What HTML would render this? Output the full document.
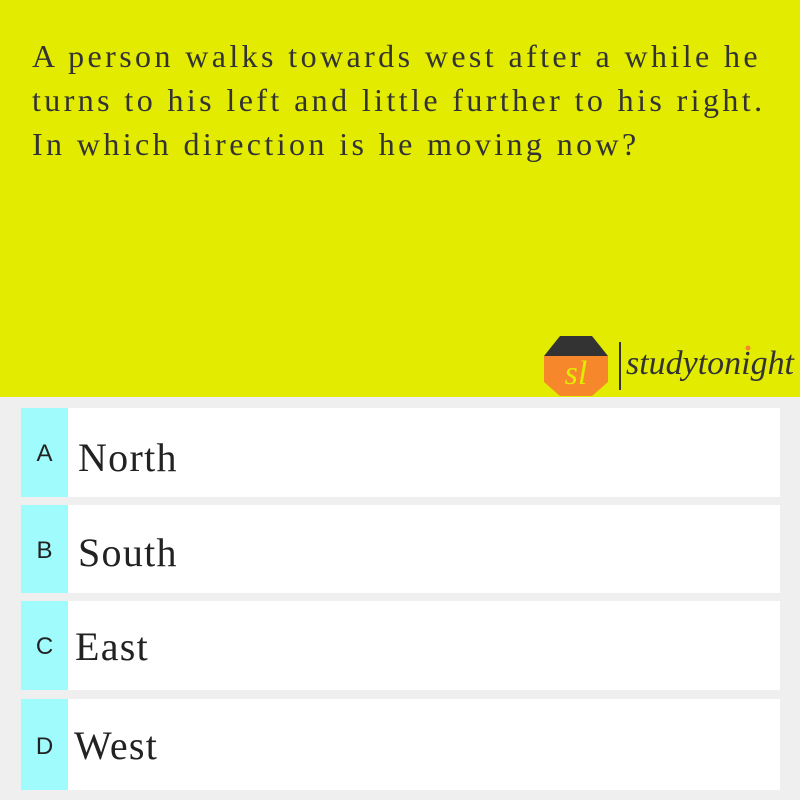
<!DOCTYPE html>
<html><head><style>
body{margin:0;width:800px;height:800px;background:#efefef;position:relative;overflow:hidden;font-family:"Liberation Serif",serif}
.top{position:absolute;left:0;top:0;width:800px;height:397px;background:#e3ec00}
.q{position:absolute;left:32px;top:34px;width:790px;font-size:32px;line-height:44px;color:#333;letter-spacing:3.4px;white-space:nowrap}
.opt{position:absolute;left:21px;width:759px;background:#fff}
.opt .l{position:absolute;left:0;top:0;bottom:0;width:47px;background:#a0fbfc;font-family:"Liberation Sans",sans-serif;font-size:24px;color:#222;text-align:center}
.opt .t{position:absolute;left:57px;font-size:40px;color:#222;letter-spacing:1.3px}
</style></head><body>
<div class="top"></div>
<div class="q">A person walks towards west after a while he<br>turns to his left and little further to his right.<br>In which direction is he moving now?</div>
<svg style="position:absolute;left:540px;top:330px" width="260" height="72" viewBox="0 0 260 72">
<path d="M4 26 L20 6 L52 6 L68 26 Z" fill="#333"/>
<path d="M4 26 H68 V52 L52 66 H20 L4 52 Z" fill="#f7872b"/>
<text x="36" y="54" font-family="Liberation Serif" font-style="italic" font-size="34" fill="#e3ec00" text-anchor="middle">sl</text>
<rect x="79" y="12" width="2" height="48" fill="#333"/>
<text x="86" y="44" font-family="Liberation Serif" font-style="italic" font-size="34" fill="#333" textLength="168" lengthAdjust="spacingAndGlyphs">studytonight</text>
<circle cx="208" cy="18" r="2.5" fill="#f7872b"/>
</svg>
<div class="opt" style="top:408px;height:89px"><div class="l" style="line-height:92px">A</div><div class="t" style="top:26px">North</div></div>
<div class="opt" style="top:505px;height:88px"><div class="l" style="line-height:92px">B</div><div class="t" style="top:24px">South</div></div>
<div class="opt" style="top:601px;height:89px"><div class="l" style="line-height:92px">C</div><div class="t" style="top:22px;left:54px">East</div></div>
<div class="opt" style="top:699px;height:91px"><div class="l" style="line-height:96px">D</div><div class="t" style="top:23px;left:53px">West</div></div>
</body></html>
